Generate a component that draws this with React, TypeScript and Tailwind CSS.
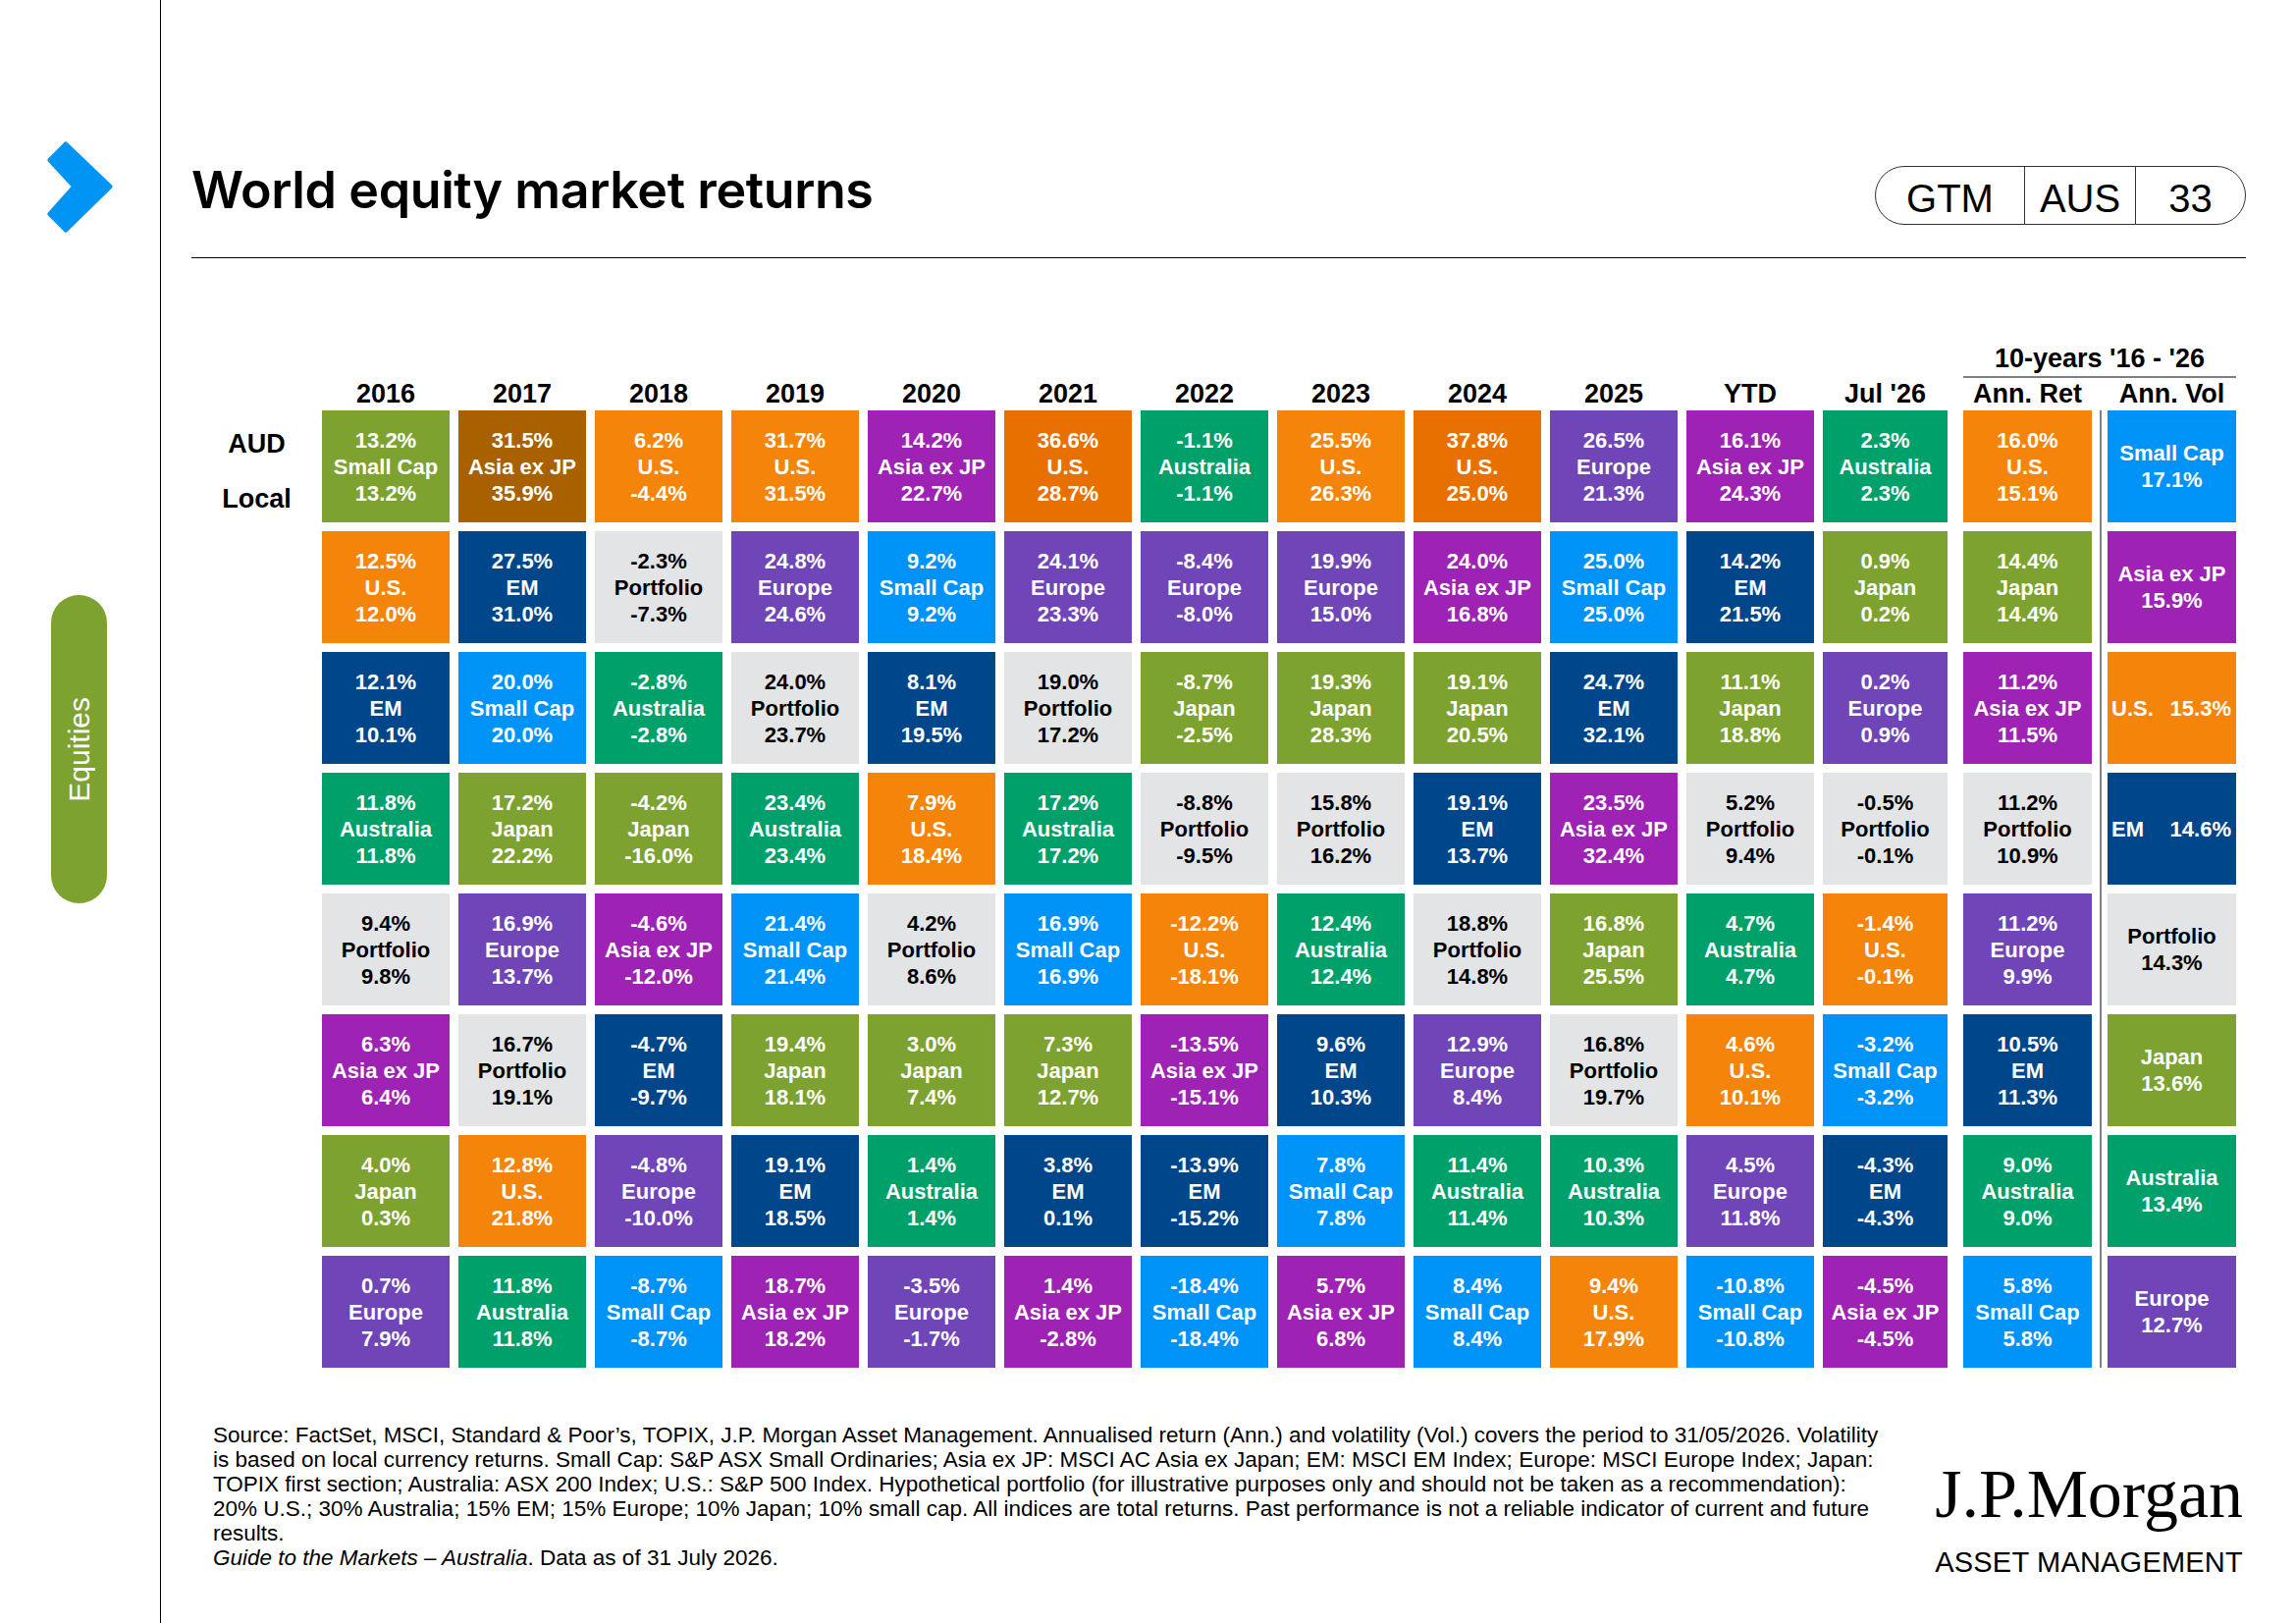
const colorClass: Record<string, string> = {
  ol: "bg-[#7da22f] text-white",
  br: "bg-[#a96100] text-white",
  or: "bg-[#f5840b] text-white",
  dor: "bg-[#e87000] text-white",
  gr: "bg-[#00a06b] text-white",
  nv: "bg-[#00468b] text-white",
  gy: "bg-[#e3e4e6] text-black",
  mg: "bg-[#9e22b3] text-white",
  pu: "bg-[#7045b8] text-white",
  lb: "bg-[#0093f7] text-white",
};

type Cell = [string, string, string, string];

const years = ["2016", "2017", "2018", "2019", "2020", "2021", "2022", "2023", "2024", "2025", "YTD", "Jul '26"];

const columns: Cell[][] = [
  [
    ["13.2%", "Small Cap", "13.2%", "ol"],
    ["12.5%", "U.S.", "12.0%", "or"],
    ["12.1%", "EM", "10.1%", "nv"],
    ["11.8%", "Australia", "11.8%", "gr"],
    ["9.4%", "Portfolio", "9.8%", "gy"],
    ["6.3%", "Asia ex JP", "6.4%", "mg"],
    ["4.0%", "Japan", "0.3%", "ol"],
    ["0.7%", "Europe", "7.9%", "pu"],
  ],
  [
    ["31.5%", "Asia ex JP", "35.9%", "br"],
    ["27.5%", "EM", "31.0%", "nv"],
    ["20.0%", "Small Cap", "20.0%", "lb"],
    ["17.2%", "Japan", "22.2%", "ol"],
    ["16.9%", "Europe", "13.7%", "pu"],
    ["16.7%", "Portfolio", "19.1%", "gy"],
    ["12.8%", "U.S.", "21.8%", "or"],
    ["11.8%", "Australia", "11.8%", "gr"],
  ],
  [
    ["6.2%", "U.S.", "-4.4%", "or"],
    ["-2.3%", "Portfolio", "-7.3%", "gy"],
    ["-2.8%", "Australia", "-2.8%", "gr"],
    ["-4.2%", "Japan", "-16.0%", "ol"],
    ["-4.6%", "Asia ex JP", "-12.0%", "mg"],
    ["-4.7%", "EM", "-9.7%", "nv"],
    ["-4.8%", "Europe", "-10.0%", "pu"],
    ["-8.7%", "Small Cap", "-8.7%", "lb"],
  ],
  [
    ["31.7%", "U.S.", "31.5%", "or"],
    ["24.8%", "Europe", "24.6%", "pu"],
    ["24.0%", "Portfolio", "23.7%", "gy"],
    ["23.4%", "Australia", "23.4%", "gr"],
    ["21.4%", "Small Cap", "21.4%", "lb"],
    ["19.4%", "Japan", "18.1%", "ol"],
    ["19.1%", "EM", "18.5%", "nv"],
    ["18.7%", "Asia ex JP", "18.2%", "mg"],
  ],
  [
    ["14.2%", "Asia ex JP", "22.7%", "mg"],
    ["9.2%", "Small Cap", "9.2%", "lb"],
    ["8.1%", "EM", "19.5%", "nv"],
    ["7.9%", "U.S.", "18.4%", "or"],
    ["4.2%", "Portfolio", "8.6%", "gy"],
    ["3.0%", "Japan", "7.4%", "ol"],
    ["1.4%", "Australia", "1.4%", "gr"],
    ["-3.5%", "Europe", "-1.7%", "pu"],
  ],
  [
    ["36.6%", "U.S.", "28.7%", "dor"],
    ["24.1%", "Europe", "23.3%", "pu"],
    ["19.0%", "Portfolio", "17.2%", "gy"],
    ["17.2%", "Australia", "17.2%", "gr"],
    ["16.9%", "Small Cap", "16.9%", "lb"],
    ["7.3%", "Japan", "12.7%", "ol"],
    ["3.8%", "EM", "0.1%", "nv"],
    ["1.4%", "Asia ex JP", "-2.8%", "mg"],
  ],
  [
    ["-1.1%", "Australia", "-1.1%", "gr"],
    ["-8.4%", "Europe", "-8.0%", "pu"],
    ["-8.7%", "Japan", "-2.5%", "ol"],
    ["-8.8%", "Portfolio", "-9.5%", "gy"],
    ["-12.2%", "U.S.", "-18.1%", "or"],
    ["-13.5%", "Asia ex JP", "-15.1%", "mg"],
    ["-13.9%", "EM", "-15.2%", "nv"],
    ["-18.4%", "Small Cap", "-18.4%", "lb"],
  ],
  [
    ["25.5%", "U.S.", "26.3%", "or"],
    ["19.9%", "Europe", "15.0%", "pu"],
    ["19.3%", "Japan", "28.3%", "ol"],
    ["15.8%", "Portfolio", "16.2%", "gy"],
    ["12.4%", "Australia", "12.4%", "gr"],
    ["9.6%", "EM", "10.3%", "nv"],
    ["7.8%", "Small Cap", "7.8%", "lb"],
    ["5.7%", "Asia ex JP", "6.8%", "mg"],
  ],
  [
    ["37.8%", "U.S.", "25.0%", "dor"],
    ["24.0%", "Asia ex JP", "16.8%", "mg"],
    ["19.1%", "Japan", "20.5%", "ol"],
    ["19.1%", "EM", "13.7%", "nv"],
    ["18.8%", "Portfolio", "14.8%", "gy"],
    ["12.9%", "Europe", "8.4%", "pu"],
    ["11.4%", "Australia", "11.4%", "gr"],
    ["8.4%", "Small Cap", "8.4%", "lb"],
  ],
  [
    ["26.5%", "Europe", "21.3%", "pu"],
    ["25.0%", "Small Cap", "25.0%", "lb"],
    ["24.7%", "EM", "32.1%", "nv"],
    ["23.5%", "Asia ex JP", "32.4%", "mg"],
    ["16.8%", "Japan", "25.5%", "ol"],
    ["16.8%", "Portfolio", "19.7%", "gy"],
    ["10.3%", "Australia", "10.3%", "gr"],
    ["9.4%", "U.S.", "17.9%", "or"],
  ],
  [
    ["16.1%", "Asia ex JP", "24.3%", "mg"],
    ["14.2%", "EM", "21.5%", "nv"],
    ["11.1%", "Japan", "18.8%", "ol"],
    ["5.2%", "Portfolio", "9.4%", "gy"],
    ["4.7%", "Australia", "4.7%", "gr"],
    ["4.6%", "U.S.", "10.1%", "or"],
    ["4.5%", "Europe", "11.8%", "pu"],
    ["-10.8%", "Small Cap", "-10.8%", "lb"],
  ],
  [
    ["2.3%", "Australia", "2.3%", "gr"],
    ["0.9%", "Japan", "0.2%", "ol"],
    ["0.2%", "Europe", "0.9%", "pu"],
    ["-0.5%", "Portfolio", "-0.1%", "gy"],
    ["-1.4%", "U.S.", "-0.1%", "or"],
    ["-3.2%", "Small Cap", "-3.2%", "lb"],
    ["-4.3%", "EM", "-4.3%", "nv"],
    ["-4.5%", "Asia ex JP", "-4.5%", "mg"],
  ],
];

const annRet: Cell[] = [
  ["16.0%", "U.S.", "15.1%", "or"],
  ["14.4%", "Japan", "14.4%", "ol"],
  ["11.2%", "Asia ex JP", "11.5%", "mg"],
  ["11.2%", "Portfolio", "10.9%", "gy"],
  ["11.2%", "Europe", "9.9%", "pu"],
  ["10.5%", "EM", "11.3%", "nv"],
  ["9.0%", "Australia", "9.0%", "gr"],
  ["5.8%", "Small Cap", "5.8%", "lb"],
];

// [name, value, colour, single line?]
const annVol: [string, string, string, boolean][] = [
  ["Small Cap", "17.1%", "lb", false],
  ["Asia ex JP", "15.9%", "mg", false],
  ["U.S.", "15.3%", "or", true],
  ["EM", "14.6%", "nv", true],
  ["Portfolio", "14.3%", "gy", false],
  ["Japan", "13.6%", "ol", false],
  ["Australia", "13.4%", "gr", false],
  ["Europe", "12.7%", "pu", false],
];

const ReturnCell = ({ cell }: { cell: Cell }) => (
  <div
    className={`h-[114px] flex flex-col items-center justify-center text-center text-[22px] leading-[27px] font-bold ${colorClass[cell[3]]}`}
  >
    <span>{cell[0]}</span>
    <span className="whitespace-nowrap">{cell[1]}</span>
    <span>{cell[2]}</span>
  </div>
);

const Header = ({ label }: { label: string }) => (
  <div className="h-[31px] leading-[31px] text-[27px] font-bold text-center text-black whitespace-nowrap mb-[1px]">
    {label}
  </div>
);

const Chevron = () => (
  <svg width="67" height="93" viewBox="0 0 67 93">
    <polygon
      points="19,3 64,46 19,90 3,74 28,46 3,19"
      fill="#0094f5"
      stroke="#0094f5"
      strokeWidth="5"
      strokeLinejoin="round"
    />
  </svg>
);

export default function App() {
  return (
    <div className="flex w-[2339px] h-[1653px] bg-white overflow-hidden font-['Liberation_Sans',Arial,sans-serif] text-black">
      {/* Left rail */}
      <aside className="w-[164px] shrink-0 border-r border-black flex flex-col">
        <div className="mt-[144px] ml-[48px]">
          <Chevron />
        </div>
        <div className="mt-[369px] ml-[52px] w-[57px] h-[314px] rounded-full bg-[#7da22f] flex items-center justify-center">
          <span className="[writing-mode:vertical-rl] rotate-180 text-white text-[30px] leading-none">Equities</span>
        </div>
      </aside>

      <main className="flex-1 pl-[31px] pr-[51px] flex flex-col">
        {/* Title row */}
        <div className="pt-[168px] flex justify-between items-start">
          <h1 className="font-['Inter',sans-serif] font-semibold text-[52px] leading-none tracking-[-0.4px]">
            World equity market returns
          </h1>
          <div className="mt-[1px] h-[60px] flex border-[1.5px] border-[#333] rounded-full text-[40px] leading-none">
            <div className="w-[151px] flex items-center justify-center pt-[6px]">GTM</div>
            <div className="w-[113px] flex items-center justify-center pt-[6px] border-l-[1.5px] border-[#333]">AUS</div>
            <div className="w-[112px] flex items-center justify-center pt-[6px] border-l-[1.5px] border-[#333]">33</div>
          </div>
        </div>
        <div className="mt-[33px] h-px bg-black" />

        {/* Table */}
        <div className="mt-[87px] flex items-start">
          <div className="w-[133px] pt-[68px]">
            <div className="h-[114px] flex flex-col items-center pt-[21px] text-[27px] leading-[27px] font-bold">
              <span>AUD</span>
              <span className="mt-[29px]">Local</span>
            </div>
          </div>

          <div className="pt-[36px] flex gap-[9px]">
            {columns.map((col, i) => (
              <div key={years[i]} className={i === 11 ? "w-[127px]" : "w-[130px]"}>
                <Header label={years[i]} />
                <div className="flex flex-col gap-[9px]">
                  {col.map((c, j) => (
                    <ReturnCell key={j} cell={c} />
                  ))}
                </div>
              </div>
            ))}
          </div>

          <div className="ml-[16px] w-[278px] flex flex-col">
            <div className="h-[31px] leading-[31px] text-[27px] font-bold text-center whitespace-nowrap">
              10-years '16 - '26
            </div>
            <div className="mt-[2px] h-[2px] bg-[#808080]" />
            <div className="mt-[1px] flex">
              <div className="w-[131px]">
                <Header label="Ann. Ret" />
                <div className="flex flex-col gap-[9px]">
                  {annRet.map((c, j) => (
                    <ReturnCell key={j} cell={c} />
                  ))}
                </div>
              </div>
              <div className="ml-[8px] mt-[32px] w-[2px] h-[975px] bg-[#808080]" />
              <div className="ml-[6px] w-[131px]">
                <Header label="Ann. Vol" />
                <div className="flex flex-col gap-[9px]">
                  {annVol.map(([name, val, col, inline]) => (
                    <div
                      key={name}
                      className={`h-[114px] flex text-[22px] leading-[27px] font-bold ${colorClass[col]} ${
                        inline ? "items-center justify-between pl-[4px] pr-[5px]" : "flex-col items-center justify-center text-center"
                      }`}
                    >
                      <span className="whitespace-nowrap">{name}</span>
                      <span>{val}</span>
                    </div>
                  ))}
                </div>
              </div>
            </div>
          </div>
        </div>

        {/* Footer */}
        <div className="mt-[56px] flex justify-between items-start">
          <div className="pl-[22px] text-[22.5px] leading-[25px] text-black">
            <p className="whitespace-nowrap">
              Source: FactSet, MSCI, Standard &amp; Poor’s, TOPIX, J.P. Morgan Asset Management. Annualised return (Ann.) and volatility (Vol.) covers the period to 31/05/2026. Volatility
            </p>
            <p className="whitespace-nowrap">
              is based on local currency returns. Small Cap: S&amp;P ASX Small Ordinaries; Asia ex JP: MSCI AC Asia ex Japan; EM: MSCI EM Index; Europe: MSCI Europe Index; Japan:
            </p>
            <p className="whitespace-nowrap">
              TOPIX first section; Australia: ASX 200 Index; U.S.: S&amp;P 500 Index. Hypothetical portfolio (for illustrative purposes only and should not be taken as a recommendation):
            </p>
            <p className="whitespace-nowrap">
              20% U.S.; 30% Australia; 15% EM; 15% Europe; 10% Japan; 10% small cap. All indices are total returns. Past performance is not a reliable indicator of current and future
            </p>
            <p>results.</p>
            <p className="whitespace-nowrap">
              <i>Guide to the Markets – Australia</i>. Data as of 31 July 2026.
            </p>
          </div>
          <div className="mt-[38px] mr-[3px] flex flex-col items-start">
            <span className="font-['Liberation_Serif',serif] text-[70px] leading-none">J.P.Morgan</span>
            <span className="mt-[20px] text-[29px] leading-none tracking-[0.2px]">ASSET MANAGEMENT</span>
          </div>
        </div>
      </main>
    </div>
  );
}
